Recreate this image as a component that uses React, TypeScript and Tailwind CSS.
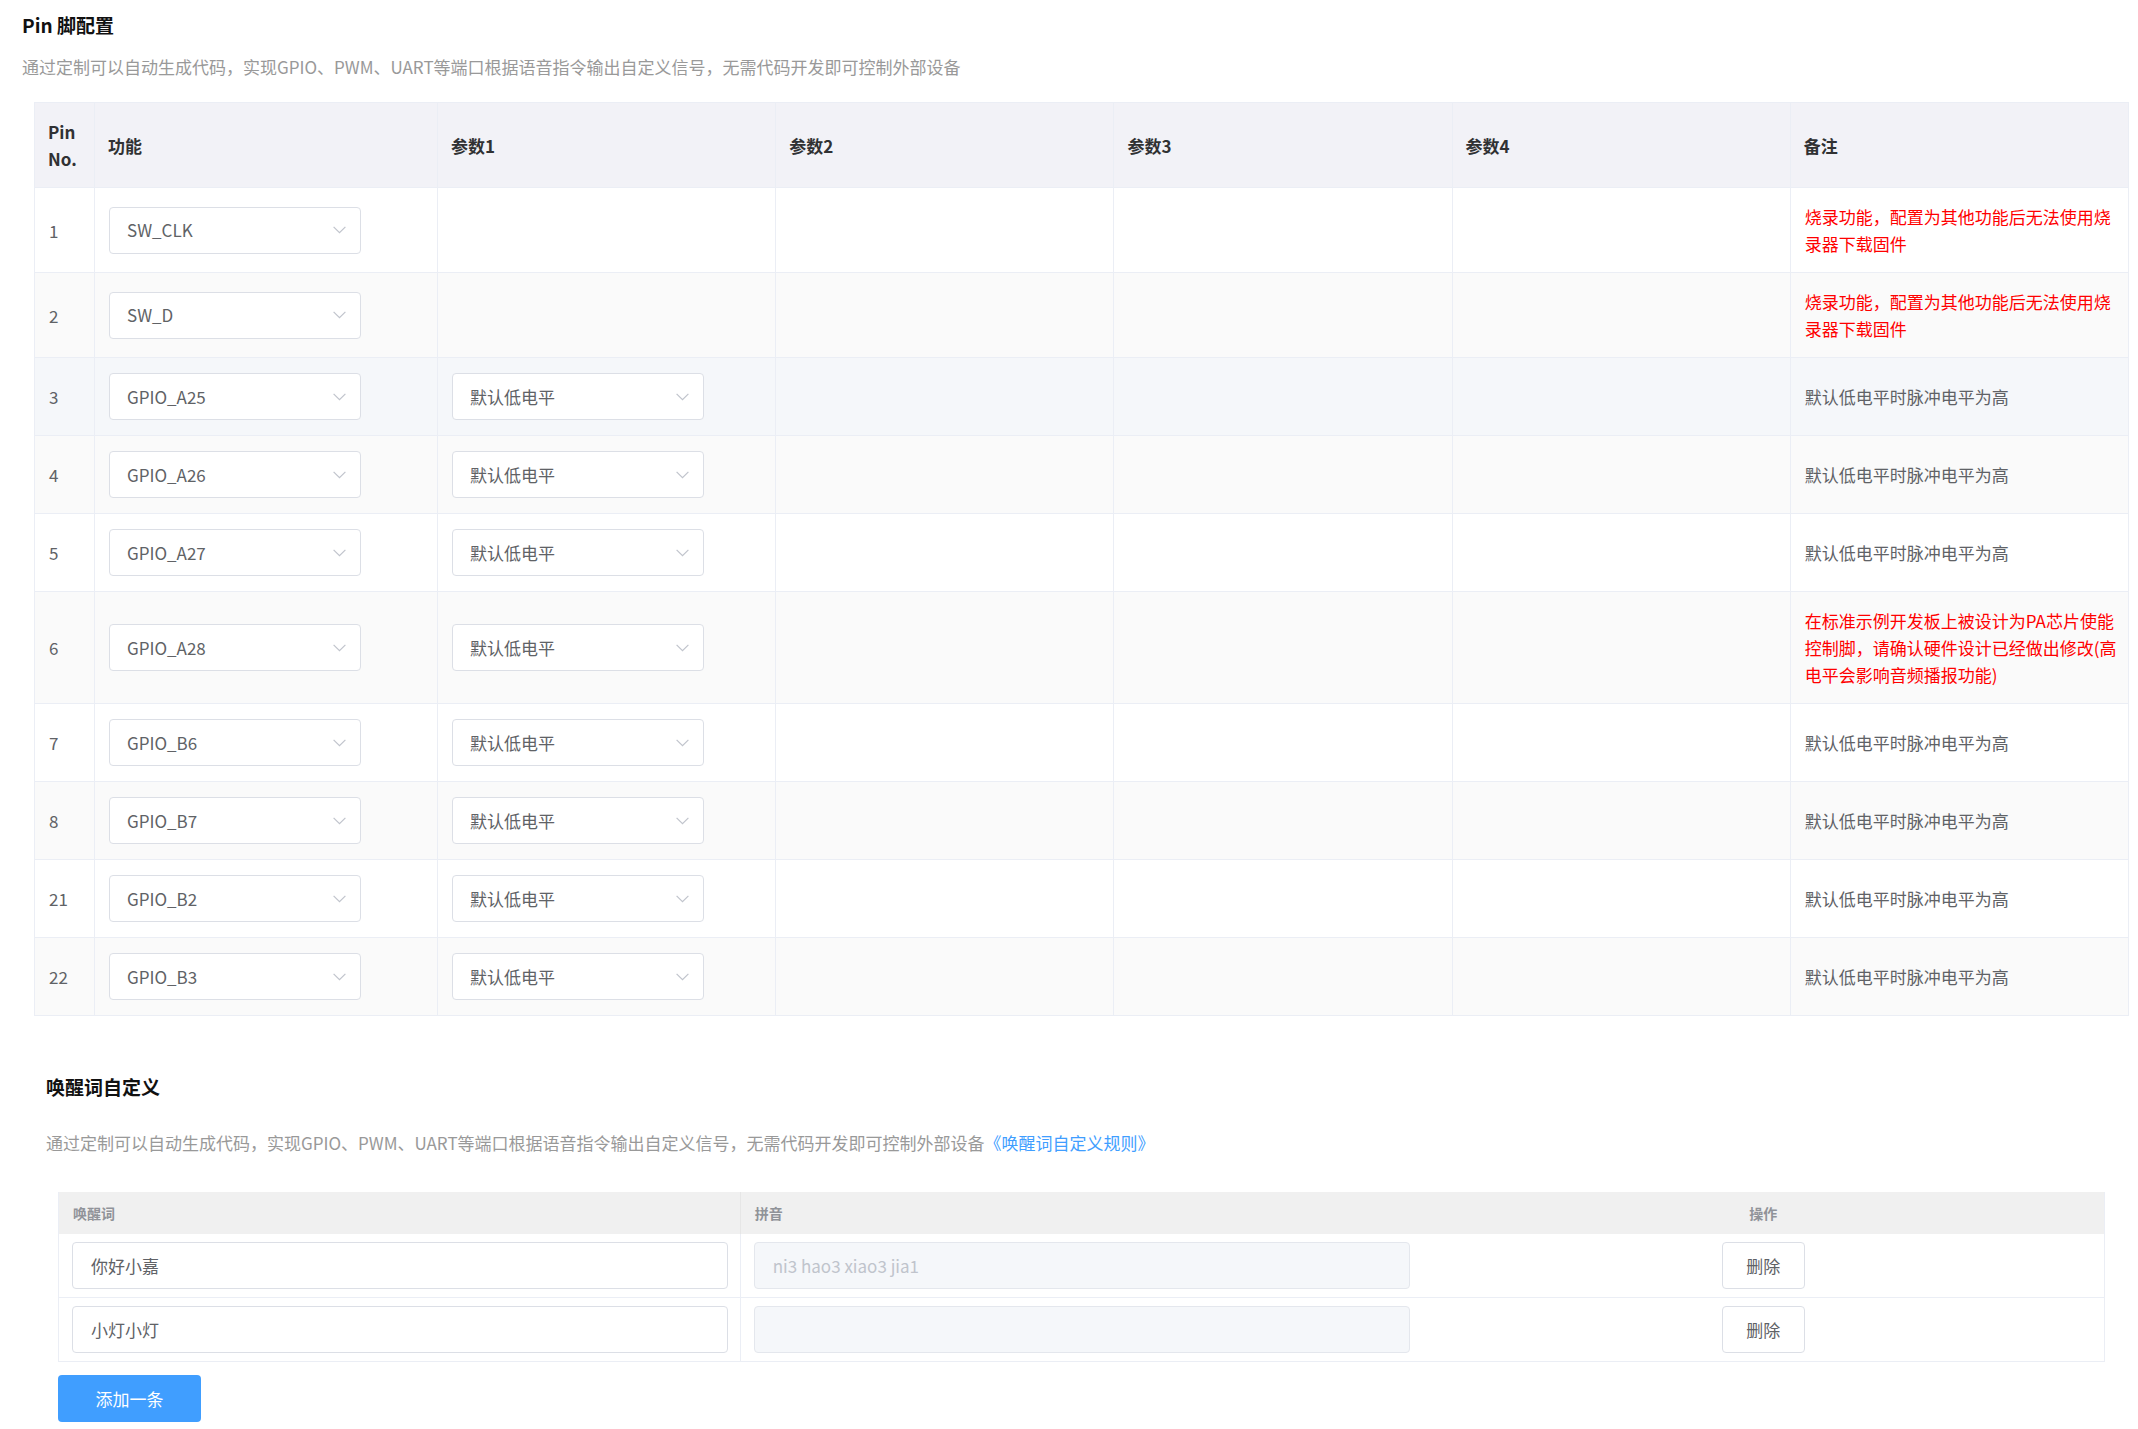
import React from 'react';

type Row = {
  pin: string;
  fn: string;
  p1: string | null;
  note: string[];
  red: boolean;
  bg: string;
};

const RED1 = ['烧录功能，配置为其他功能后无法使用烧', '录器下载固件'];
const GRAY = ['默认低电平时脉冲电平为高'];

const rows: Row[] = [
  { pin: '1', fn: 'SW_CLK', p1: null, note: RED1, red: true, bg: 'bg-white' },
  { pin: '2', fn: 'SW_D', p1: null, note: RED1, red: true, bg: 'bg-[#fafafa]' },
  { pin: '3', fn: 'GPIO_A25', p1: '默认低电平', note: GRAY, red: false, bg: 'bg-[#f5f7fa]' },
  { pin: '4', fn: 'GPIO_A26', p1: '默认低电平', note: GRAY, red: false, bg: 'bg-[#fafafa]' },
  { pin: '5', fn: 'GPIO_A27', p1: '默认低电平', note: GRAY, red: false, bg: 'bg-white' },
  {
    pin: '6',
    fn: 'GPIO_A28',
    p1: '默认低电平',
    note: ['在标准示例开发板上被设计为PA芯片使能', '控制脚，请确认硬件设计已经做出修改(高', '电平会影响音频播报功能)'],
    red: true,
    bg: 'bg-[#fafafa]',
  },
  { pin: '7', fn: 'GPIO_B6', p1: '默认低电平', note: GRAY, red: false, bg: 'bg-white' },
  { pin: '8', fn: 'GPIO_B7', p1: '默认低电平', note: GRAY, red: false, bg: 'bg-[#fafafa]' },
  { pin: '21', fn: 'GPIO_B2', p1: '默认低电平', note: GRAY, red: false, bg: 'bg-white' },
  { pin: '22', fn: 'GPIO_B3', p1: '默认低电平', note: GRAY, red: false, bg: 'bg-[#fafafa]' },
];

function Chevron() {
  return (
    <svg width="13" height="8" viewBox="0 0 13 8" fill="none">
      <path d="M0.6 0.8 L6.5 6.7 L12.4 0.8" stroke="#c0c4cc" strokeWidth="1.2" />
    </svg>
  );
}

function Select({ value }: { value: string }) {
  return (
    <div className="flex h-[47px] w-[252px] shrink-0 items-center justify-between rounded-[4px] border border-[#dcdfe6] bg-white pl-[17px] pr-[14px] text-[17px] leading-[24px] text-[#606266]">
      <span>{value}</span>
      <Chevron />
    </div>
  );
}

const cols = 'grid grid-cols-[60px_343px_repeat(5,minmax(0,1fr))]';
const cell = 'flex items-center border-r border-b border-[#ebeef5] px-[14px] py-[15px]';
const headCell = 'flex items-center border-r border-b border-[#ebeef5] px-[13px] py-[15px] text-[17px] font-bold leading-[27px] text-[#303133]';

export default function App() {
  return (
    <div className="min-h-[1429px] bg-white pt-[12px] font-['Noto_Sans_CJK_SC',sans-serif]">
      <div className="ml-[22px] text-[19px] font-bold leading-[26px] text-[#111111]">Pin 脚配置</div>
      <div className="ml-[22px] mt-[17px] text-[17px] leading-[24px] text-[#999999]">
        通过定制可以自动生成代码，实现GPIO、PWM、UART等端口根据语音指令输出自定义信号，无需代码开发即可控制外部设备
      </div>

      <div className="ml-[34px] mr-[9px] mt-[23px] border-l border-t border-[#ebeef5]">
        <div className={`${cols} bg-[#f2f2f7]`}>
          <div className={headCell}>
            <span>
              Pin
              <br />
              No.
            </span>
          </div>
          <div className={headCell}>功能</div>
          <div className={headCell}>参数1</div>
          <div className={headCell}>参数2</div>
          <div className={headCell}>参数3</div>
          <div className={headCell}>参数4</div>
          <div className={headCell}>备注</div>
        </div>
        {rows.map((r) => (
          <div key={r.pin} className={`${cols} ${r.bg}`}>
            <div className={`${cell} text-[17px] leading-[27px] text-[#606266]`}>{r.pin}</div>
            <div className={cell}>
              <Select value={r.fn} />
            </div>
            <div className={cell}>{r.p1 ? <Select value={r.p1} /> : null}</div>
            <div className={cell}></div>
            <div className={cell}></div>
            <div className={cell}></div>
            <div className={`${cell} text-[17px] leading-[27px] ${r.red ? 'text-[#ff0000]' : 'text-[#606266]'}`}>
              <div>
                {r.note.map((l, i) => (
                  <div key={i} className="whitespace-nowrap">
                    {l}
                  </div>
                ))}
              </div>
            </div>
          </div>
        ))}
      </div>

      <div className="ml-[46px] mt-[58px] text-[19px] font-bold leading-[26px] text-[#111111]">唤醒词自定义</div>
      <div className="ml-[46px] mt-[31px] text-[17px] leading-[24px] text-[#999999]">
        通过定制可以自动生成代码，实现GPIO、PWM、UART等端口根据语音指令输出自定义信号，无需代码开发即可控制外部设备
        <span className="text-[#409eff]">《唤醒词自定义规则》</span>
      </div>

      <div className="ml-[58px] mt-[37px] w-[2047px] border-l border-r border-[#ebeef5]">
        <div className="grid h-[42px] grid-cols-3 bg-[#f0f0f0] text-[14px] font-semibold text-[#909399]">
          <div className="flex items-center border-r border-[#e6e6e6] px-[14px]">唤醒词</div>
          <div className="flex items-center px-[14px]">拼音</div>
          <div className="flex items-center justify-center">操作</div>
        </div>
        {[
          { w: '你好小嘉', py: 'ni3 hao3 xiao3 jia1' },
          { w: '小灯小灯', py: '' },
        ].map((r, i) => (
          <div key={i} className="grid h-[64px] grid-cols-3 border-b border-[#ebeef5] bg-white">
            <div className="flex items-center border-r border-[#ebeef5] pl-[13px] pr-[12px]">
              <div className="flex h-[47px] w-full items-center rounded-[4px] border border-[#dcdfe6] bg-white pl-[18px] text-[17px] text-[#606266]">
                {r.w}
              </div>
            </div>
            <div className="flex items-center pl-[13px] pr-[12px]">
              <div className="flex h-[47px] w-full items-center rounded-[4px] border border-[#e4e7ed] bg-[#f5f7fa] pl-[18px] text-[17px] text-[#c0c4cc]">
                {r.py}
              </div>
            </div>
            <div className="flex items-center justify-center">
              <div className="flex h-[47px] w-[83px] items-center justify-center rounded-[4px] border border-[#dcdfe6] bg-white text-[17px] text-[#606266]">
                删除
              </div>
            </div>
          </div>
        ))}
      </div>

      <div className="ml-[58px] mt-[13px] flex h-[47px] w-[143px] items-center justify-center rounded-[4px] bg-[#409eff] text-[17px] text-white">
        添加一条
      </div>
    </div>
  );
}
